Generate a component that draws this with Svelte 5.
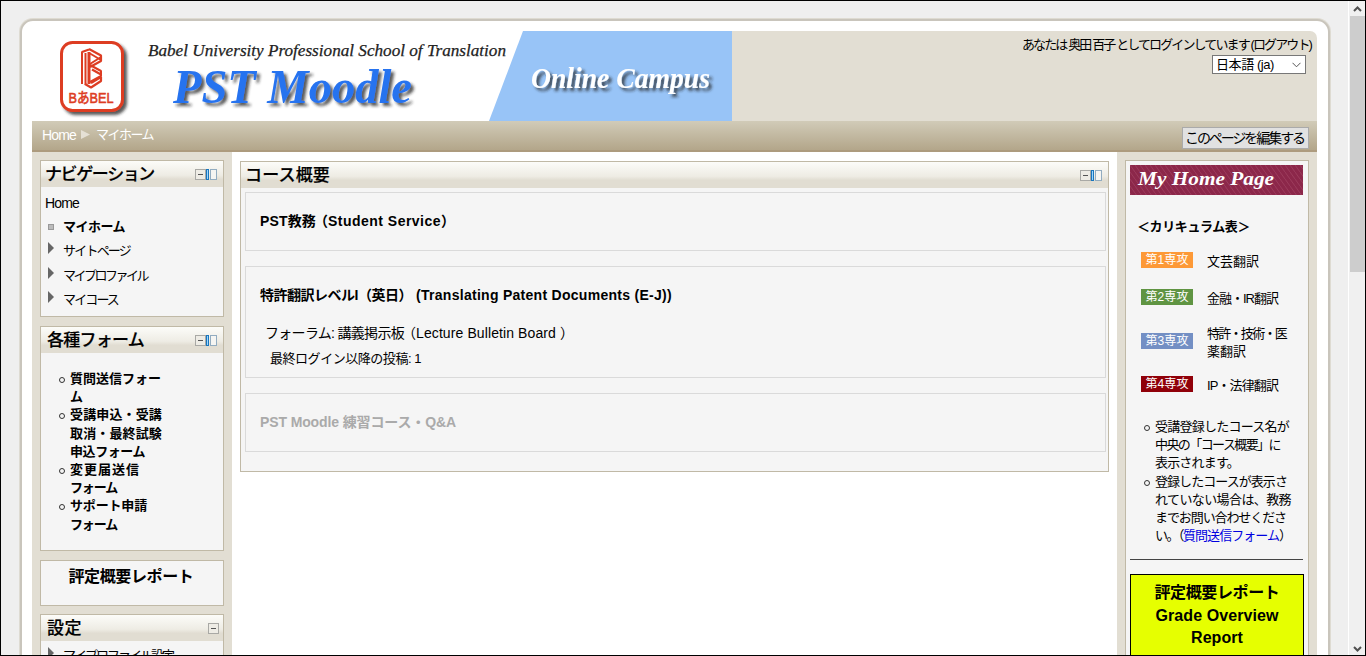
<script>
  const navigation = [
    { text: 'サイトページ', width: 67 },
    { text: 'マイプロファイル', width: 84 },
    { text: 'マイコース', width: 55 }
  ];

  const forms = [
    [['質問送信フォー', 91], ['ム', 12]],
    [['受講申込・受講', 92], ['取消・最終試験', 92], ['申込フォーム', 75]],
    [['変更届送信', 70], ['フォーム', 47]],
    [['サポート申請', 77], ['フォーム', 47]]
  ];

  const majors = [
    { label: '第1専攻', color: '#fd9937', height: 37, lines: [['文芸翻訳', 52]] },
    { label: '第2専攻', color: '#5f9442', height: 36, lines: [['金融・IR翻訳', 71]] },
    { label: '第3専攻', color: '#738fc4', height: 51, lines: [['特許・技術・医', 79], ['薬翻訳', 39]] },
    { label: '第4専攻', color: '#900009', height: 36, lines: [['IP・法律翻訳', 71]] }
  ];

  // Spreads or tightens the characters so that a label fills the given width.
  function fit(node, width) {
    const apply = (target) => {
      node.style.letterSpacing = '0px';
      const count = Array.from(node.textContent).length;
      const gap = (target - node.getBoundingClientRect().width) / count;
      node.style.letterSpacing = `${gap}px`;
    };
    apply(width);
    return { update: apply };
  }
</script>

{#snippet label(text, width)}<span class="fit" use:fit={width}>{text}</span>{/snippet}

{#snippet controls()}
  <svg class="controls" width="23" height="12" viewBox="0 0 23 12">
    <rect x=".5" y=".5" width="10" height="10" fill="#eeece5" stroke="#a9a9a5" />
    <path d="M3 5.5h5" stroke="#555" />
    <rect x="11.5" y=".5" width="2" height="10" fill="#9bd5ff" stroke="#1976bd" />
    <rect x="15.5" y=".5" width="6" height="10" fill="#f5f5f2" stroke="#92acc0" />
  </svg>
{/snippet}

<div class="screen">
  <div class="viewport">
    <div class="page">
      <header>
        <svg class="banner" width="700" height="90" viewBox="0 0 700 90">
          <defs>
            <filter id="shadow" x="-10%" y="-20%" width="125%" height="150%">
              <feDropShadow dx="3" dy="3" stdDeviation="1.4" flood-color="#222" flood-opacity=".75" />
            </filter>
          </defs>
          <rect width="700" height="90" fill="#fff" />
          <path d="M491 0H700V90H457Z" fill="#98c4f7" />
          <rect x="29.5" y="11.5" width="61" height="68" rx="11" fill="#fff" stroke="#dd3d23" stroke-width="3" filter="url(#shadow)" />
          <g fill="none" stroke="#dd3d23" stroke-linejoin="bevel">
            <path d="M50 53V21L57 18.5" stroke-width="2" />
            <path d="M53.5 54V22" stroke-width="2" />
            <path d="M57 53V21" stroke-width="3" />
            <path d="M57 18L69 24.5V30L58 36" stroke-width="2.2" />
            <path d="M58 22.5L69 29M58 33L69 26M58 34L69 40V45L58 51" stroke-width="2" />
            <path d="M60 38.5L69 43.5M53 53L59 56.5L69 50V46L59 52" stroke-width="2.2" />
          </g>
          <text class="brand" x="36.5" y="71.5" textLength="45" lengthAdjust="spacingAndGlyphs">BあBEL</text>
          <text class="school" x="116" y="25" textLength="358" lengthAdjust="spacingAndGlyphs">Babel University Professional School of Translation</text>
          <text class="product" x="141" y="71.5" textLength="239" lengthAdjust="spacingAndGlyphs" filter="url(#shadow)">PST Moodle</text>
          <text class="campus" x="499" y="56.5" textLength="179" lengthAdjust="spacingAndGlyphs" filter="url(#shadow)">Online Campus</text>
        </svg>
        <div class="account">
          <div class="login">{@render label('あなたは 奥田 百子 としてログインしています (ログアウト)', 289)}</div>
          <div class="language">
            {@render label('日本語 (ja)', 58)}
            <svg width="9" height="6" viewBox="0 0 9 6"><path d="M.5 .8L4.5 4.8L8.5 .8" fill="none" stroke="#555" /></svg>
          </div>
        </div>
      </header>

      <nav>
        <div class="crumbs">
          <span class="latin">{@render label('Home', 34)}</span>
          <svg width="9" height="9" viewBox="0 0 9 9"><path d="M0 0L9 4.5L0 9Z" fill="#e5e0d5" /></svg>
          {@render label('マイホーム', 57)}
        </div>
        <button>{@render label('このページを編集する', 119)}</button>
      </nav>

      <div class="columns">
        <aside>
          <section class="block navigation">
            <h2>{@render label('ナビゲーション', 109)}{@render controls()}</h2>
            <div class="tree">
              <div class="home latin">{@render label('Home', 34)}</div>
              <div class="node current"><i></i><b>{@render label('マイホーム', 62)}</b></div>
              {#each navigation as item}
                <div class="node">
                  <svg width="6" height="12" viewBox="0 0 6 12"><path d="M0 0L6 6L0 12Z" fill="#666" /></svg>
                  {@render label(item.text, item.width)}
                </div>
              {/each}
            </div>
          </section>

          <section class="block forms">
            <h2 class="inset">{@render label('各種フォーム', 97)}{@render controls()}</h2>
            <ul>
              {#each forms as lines}
                <li>{#each lines as line}<div>{@render label(line[0], line[1])}</div>{/each}</li>
              {/each}
            </ul>
          </section>

          <section class="block report">{@render label('評定概要レポート', 125)}</section>

          <section class="block settings">
            <h2 class="inset">
              {@render label('設定', 35)}
              <svg width="11" height="11" viewBox="0 0 11 11"><rect x=".5" y=".5" width="10" height="10" fill="#eeece5" stroke="#a9a9a5" /><path d="M3 5.5h5" stroke="#555" /></svg>
            </h2>
            <div class="tree">
              <div class="node">
                <svg width="6" height="12" viewBox="0 0 6 12"><path d="M0 0L6 6L0 12Z" fill="#666" /></svg>
                {@render label('マイプロファイル設定', 110)}
              </div>
            </div>
          </section>
        </aside>

        <main>
          <section class="block overview">
            <h2>{@render label('コース概要', 85)}{@render controls()}</h2>
            <article class="short">
              <h3>{@render label('PST教務', 56)}<span class="open">（</span>{@render label('Student Service', 113)}<span class="close">）</span></h3>
            </article>
            <article class="long">
              <h3>{@render label('特許翻訳レベルI（英日）', 152)}<span class="english">{@render label('(Translating Patent Documents (E-J))', 256)}</span></h3>
              <p>{@render label('フォーラム: 講義掲示板', 139)}<span class="open">（</span>{@render label('Lecture Bulletin Board', 140)}<span class="close far">）</span></p>
              <p class="posts">{@render label('最終ログイン以降の投稿: 1', 151)}</p>
            </article>
            <article class="short hidden-course">
              <h3>{@render label('PST Moodle 練習コース・Q&A', 196)}</h3>
            </article>
          </section>
        </main>

        <aside class="right">
          <section class="block homepage">
            <svg class="title" width="173" height="30" viewBox="0 0 173 30">
              <defs>
                <pattern id="weave" width="5" height="7" patternUnits="userSpaceOnUse">
                  <rect width="5" height="7" fill="#8c274a" />
                  <path d="M0 0L5 7" stroke="#a0405f" stroke-width=".8" />
                </pattern>
              </defs>
              <rect width="173" height="30" fill="url(#weave)" />
              <text x="8" y="19.5" textLength="136" lengthAdjust="spacingAndGlyphs">My Home Page</text>
            </svg>
            <h4>{@render label('＜カリキュラム表＞', 113)}</h4>
            <div class="majors">
              {#each majors as major}
                <div class="major" style:height="{major.height}px">
                  <span class="badge" style:background={major.color}>{@render label(major.label, 43)}</span>
                  <div>{#each major.lines as line}<div>{@render label(line[0], line[1])}</div>{/each}</div>
                </div>
              {/each}
            </div>
            <ul>
              <li>
                <div>{@render label('受講登録したコース名が', 134)}</div>
                <div>{@render label('中央の「コース概要」に', 125)}</div>
                <div>{@render label('表示されます。', 84)}</div>
              </li>
              <li>
                <div>{@render label('登録したコースが表示さ', 132)}</div>
                <div>{@render label('れていない場合は、教務', 136)}</div>
                <div>{@render label('までお問い合わせくださ', 131)}</div>
                <div>{@render label('い。（', 28)}<a href="#form">{@render label('質問送信フォーム', 96)}</a>{@render label('）', 10)}</div>
              </li>
            </ul>
            <hr />
            <div class="grade">
              <div>{@render label('評定概要レポート', 125)}</div>
              <div>{@render label('Grade Overview', 123)}</div>
              <div>{@render label('Report', 52)}</div>
            </div>
          </section>
        </aside>
      </div>
    </div>
  </div>
  <div class="scrollbar">
    <svg width="9" height="6" viewBox="0 0 9 6"><path d="M1 5L4.5 1.5L8 5" fill="none" stroke="#505050" stroke-width="2" /></svg>
    <div class="thumb"></div>
    <svg width="9" height="6" viewBox="0 0 9 6"><path d="M1 1L4.5 4.5L8 1" fill="none" stroke="#505050" stroke-width="2" /></svg>
  </div>
</div>

<style>
  :global(body) { margin: 0; overflow: hidden; }
  *, *::before { box-sizing: border-box; }
  .screen {
    display: flex;
    width: 1366px;
    height: 656px;
    overflow: hidden;
    border: 1px solid #000;
    background: #efefef;
    color: #000;
    font: 13px/18px "Liberation Sans", "Noto Sans CJK JP", sans-serif;
  }
  .fit { white-space: nowrap; }
  .latin { font-size: 14px; }
  .viewport { flex: 1; padding: 18px 18px 0 19px; overflow: hidden; }
  .page {
    width: 1310px;
    height: 720px;
    padding: 10px 10px 0;
    border: 2px solid #c9c5bc;
    border-radius: 13px 13px 0 0;
    box-shadow: 0 0 0 1px #dedbd2;
    background: #fff;
  }
  header { display: flex; width: 1285px; height: 90px; background: #e2ded3; border-top-right-radius: 7px; }
  .banner { display: block; flex: none; }
  .brand { font: 15px "Liberation Sans", "Noto Sans CJK JP", sans-serif; fill: #dd3d23; stroke: #dd3d23; stroke-width: .6px; }
  .school { font: italic 17px "Liberation Serif", serif; fill: #222; stroke: #222; stroke-width: .25px; }
  .product { font: italic bold 49px "Liberation Serif", serif; fill: #2873ef; }
  .campus { font: italic bold 29px "Liberation Serif", serif; fill: #fff; }
  .account { display: flex; flex: 1; flex-direction: column; align-items: flex-end; padding: 5px 6px 0 0; }
  .login { height: 19px; }
  .language {
    display: flex;
    align-items: center;
    justify-content: space-between;
    width: 94px;
    height: 19px;
    margin-right: 5px;
    padding: 0 4px 0 3px;
    border: 1px solid #777;
    background: #fff;
  }
  nav {
    display: flex;
    align-items: flex-start;
    justify-content: space-between;
    width: 1285px;
    height: 31px;
    padding: 4px 8px 0 10px;
    border-bottom: 2px solid #ad9b7e;
    background: linear-gradient(#d1cbb8, #b3a68a);
  }
  .crumbs { display: flex; align-items: center; margin-top: 1px; color: #fff; }
  .crumbs svg { margin: -1px 6px 0 5px; }
  button {
    width: 127px;
    height: 22px;
    margin-top: 2px;
    padding: 0 2px 1px 0;
    border: 1px solid #aaa;
    background: #e1e1e1;
    font: 14px/18px "Liberation Sans", "Noto Sans CJK JP", sans-serif;
    color: #000;
  }
  .columns { display: flex; width: 1285px; height: 560px; }
  aside { flex: none; width: 200px; padding: 8px 8px 0; background: #e2ded3; }
  main { flex: 1; padding: 9px 8px 0; }
  .block { border: 1px solid #c0b9a6; background: #f5f5f5; }
  h2 {
    display: flex;
    align-items: center;
    justify-content: space-between;
    height: 26px;
    margin: 0;
    padding: 1px 5px 0 4px;
    background: linear-gradient(#fcfcf9, #eeece4 55%, #e1ddd2 70%, #e1ddd2);
    font-size: 17px;
    font-weight: 500;
    -webkit-text-stroke: .2px #000;
  }
  .inset { padding-left: 6px; }
  .navigation { height: 157px; margin-bottom: 9px; }
  .tree { padding: 4px 4px 0 3px; }
  .home { height: 24px; padding-left: 1px; line-height: 24px; }
  .node { display: flex; align-items: center; height: 24.3px; padding-left: 4px; }
  .node svg { margin: -6px 9px 0 0; }
  .current i { width: 6px; height: 6px; margin-right: 9px; border: 1px solid #999; background: #bbb; }
  .forms { height: 225px; margin-bottom: 9px; }
  ul { margin: 0; padding: 0 0 0 29px; list-style: none; line-height: 18.2px; }
  li { position: relative; }
  li::before {
    content: "";
    position: absolute;
    left: -11px;
    top: 7px;
    width: 6px;
    height: 6px;
    border: 1.5px solid #333;
    border-radius: 50%;
  }
  .forms ul { padding-top: 17px; font-weight: bold; }
  .report { height: 46px; margin-bottom: 8px; padding: 7px 2px 0 0; text-align: center; font-size: 16px; font-weight: bold; }
  .settings { height: 100px; }
  .settings h2 svg { margin-right: -1px; }
  .settings .tree { padding-top: 3px; }
  .overview { height: 311px; padding: 0 2px 0 4px; }
  .overview h2 { margin: 0 -2px 4px -4px; }
  article { padding: 19px 14px 0; border: 1px solid #dadada; margin-bottom: 15px; }
  .short { height: 59px; }
  .long { height: 112px; }
  h3 { display: flex; height: 18px; margin: 0; font-size: 14px; line-height: 19px; }
  .open, .close { display: flex; width: 12px; overflow: visible; }
  .open { justify-content: flex-end; }
  .far { margin-left: 4px; }
  .english { margin-left: 4px; }
  p { display: flex; height: 18px; margin: 20px 0 0 5px; font-size: 14px; }
  .posts { margin: 8px 0 0 10px; font-size: 13px; }
  .hidden-course h3 { color: #aaa; }
  .homepage { height: 600px; padding: 4px; }
  .title { display: block; }
  .title text { font: italic bold 19px "Liberation Serif", serif; fill: #fff; }
  h4 { height: 18px; margin: 23px 0 0 7px; font-size: 13px; line-height: 18px; }
  .majors { padding: 16px 0 0 11px; }
  .major { display: flex; align-items: flex-start; }
  .major > div { padding-top: 1px; }
  .badge { flex: none; width: 52px; height: 16px; margin-right: 14px; color: #fff; font-size: 12px; line-height: 17px; text-align: center; }
  .major:nth-child(3) .badge { margin-top: 8px; }
  .major:nth-child(3) > div { padding-top: 0; }
  .homepage ul { padding: 6px 0 0 25px; }
  a { color: #0000e0; text-decoration: none; }
  hr { width: 173px; margin: 14px 0; border: 0; border-top: 1px solid #444; }
  .grade { width: 174px; height: 110px; padding-top: 7px; border: 1px solid #000; background: #e6ff00; text-align: center; font-size: 16px; font-weight: bold; line-height: 22.5px; }
  .scrollbar { display: flex; flex: none; flex-direction: column; align-items: center; width: 17px; padding-top: 5px; background: #f0f0f0; border-left: 1px solid #fff; }
  .scrollbar svg { flex: none; }
  .scrollbar svg:last-child { margin: auto 0 3px; }
  .thumb { width: 15px; height: 256px; margin-top: 4px; background: #cdcdcd; }
</style>
